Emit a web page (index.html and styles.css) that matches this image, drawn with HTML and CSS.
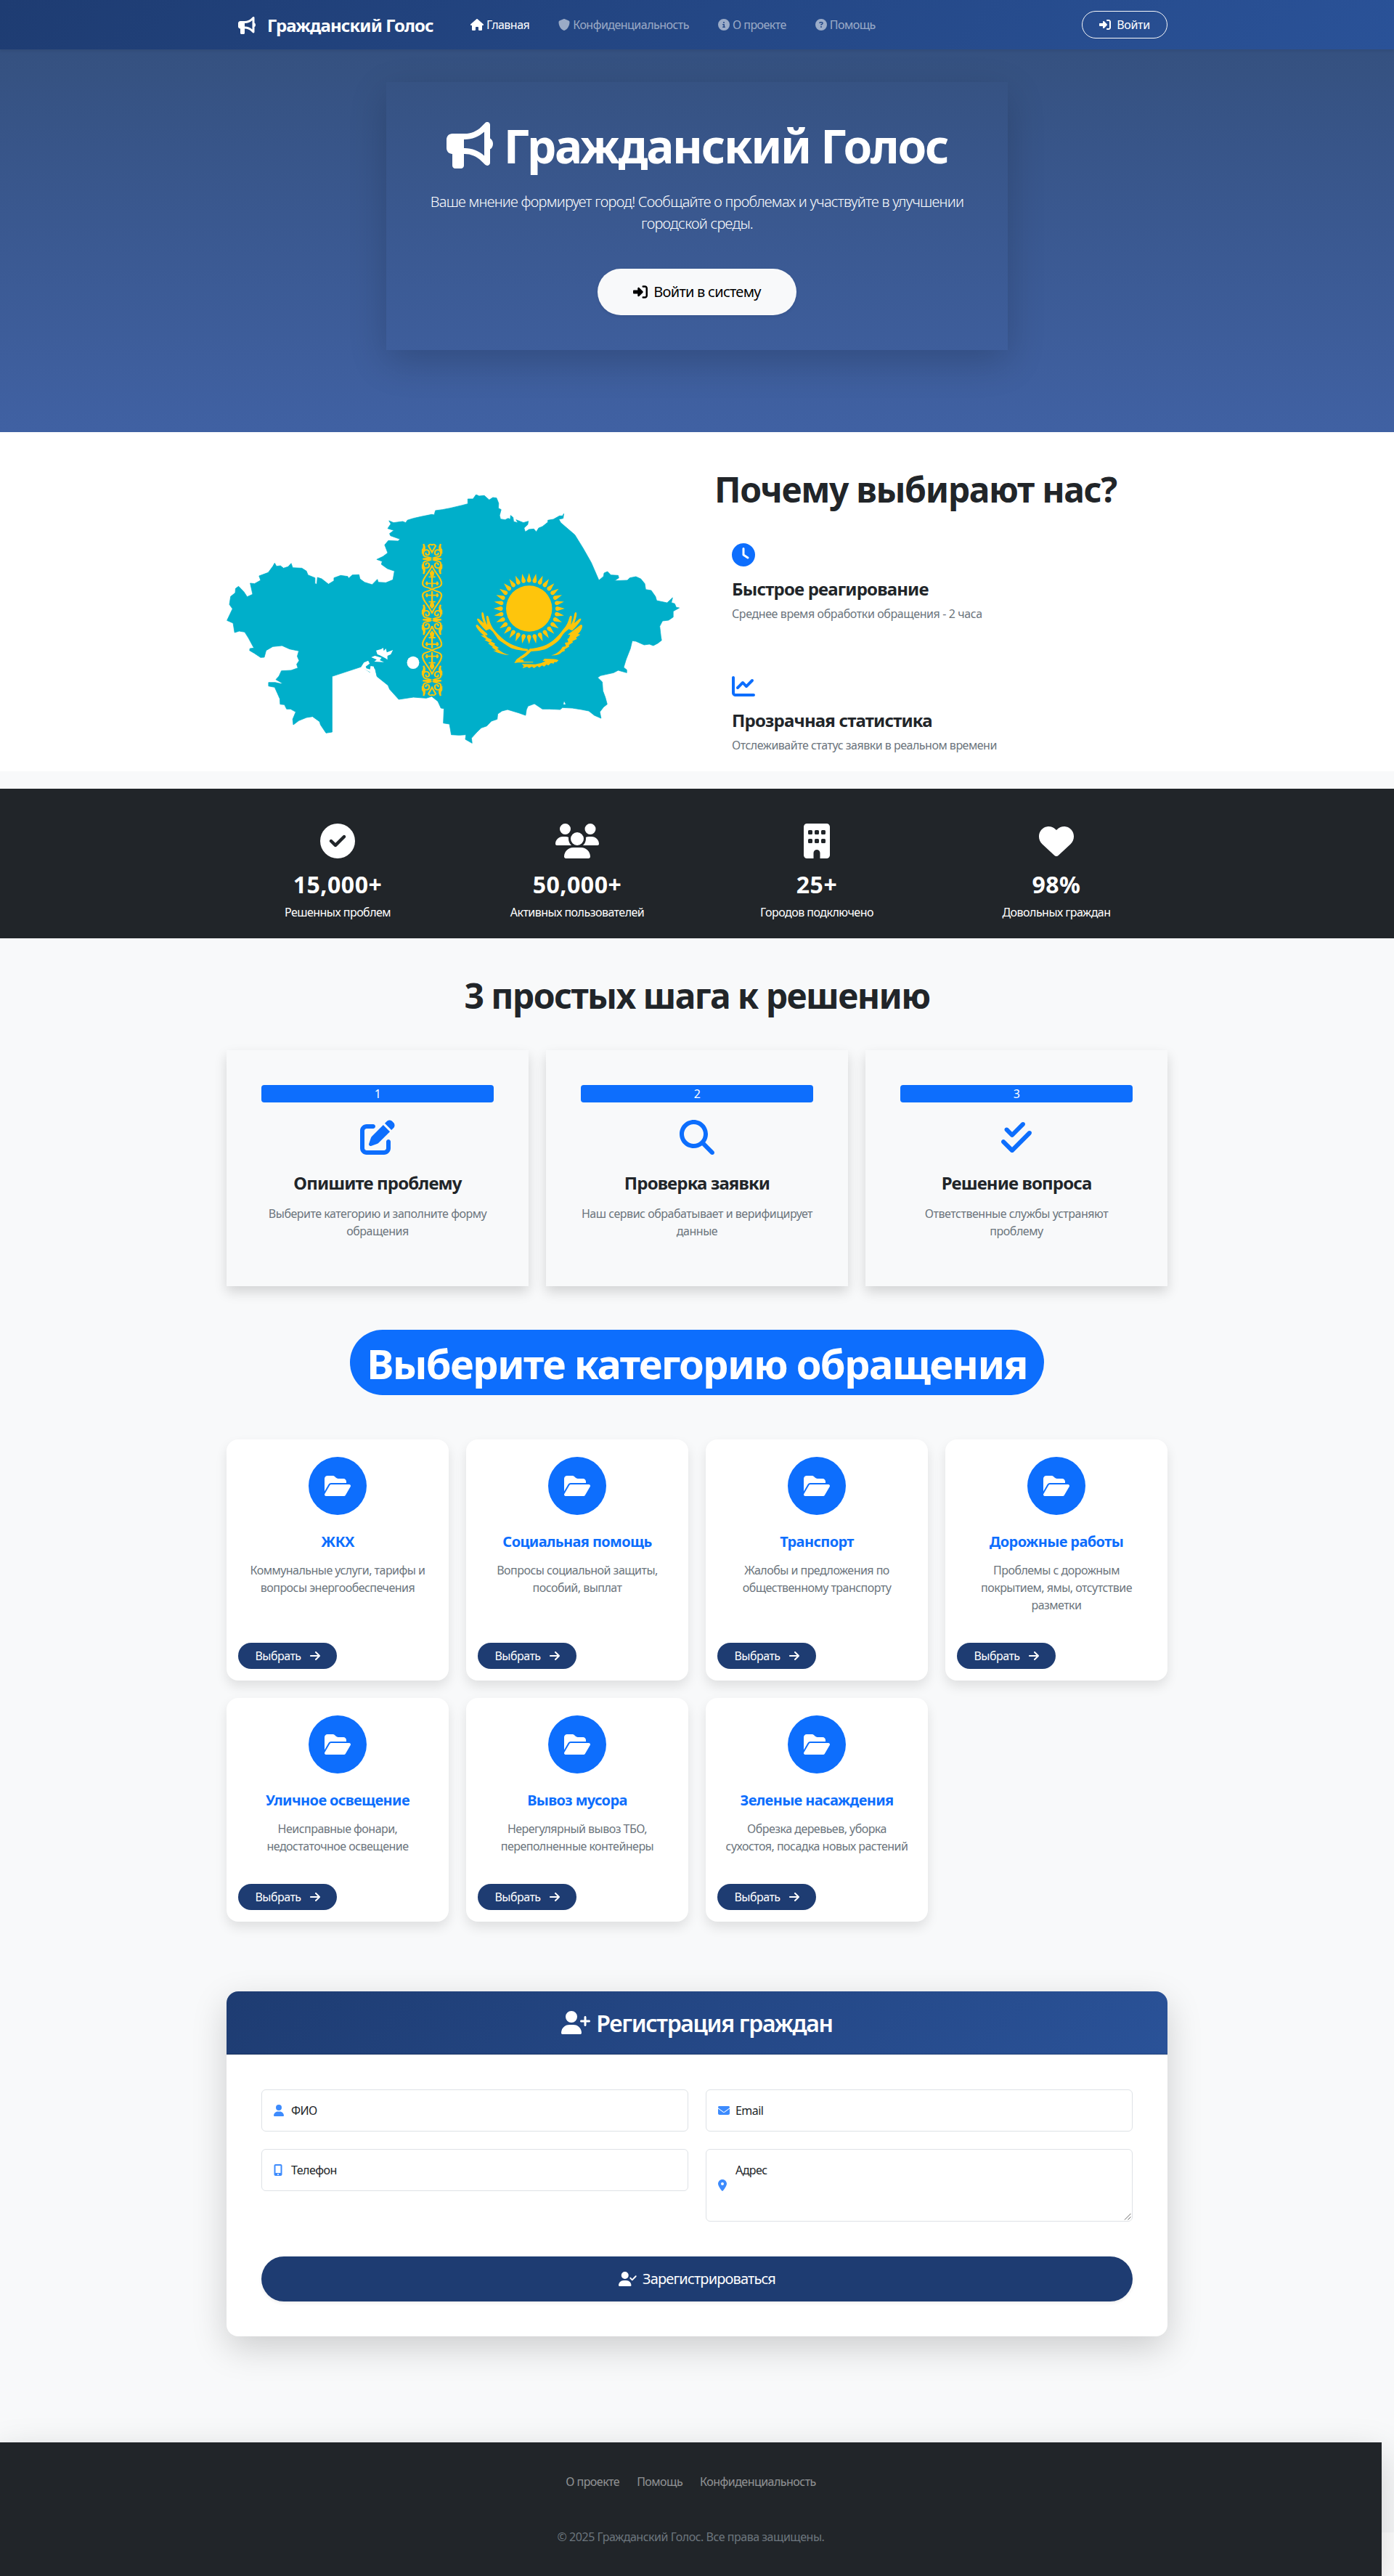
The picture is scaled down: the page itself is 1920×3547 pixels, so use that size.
FILE: index.html
```html
<!DOCTYPE html>
<html lang="ru">
<head>
<meta charset="utf-8">
<title>Гражданский Голос</title>
<link rel="stylesheet" href="styles.css">
</head>
<body>
<svg class="sprite" aria-hidden="true">
  <symbol id="bullhorn" viewBox="0 0 512 512"><path d="M480 32c0-12.900-7.800-24.600-19.800-29.600s-25.700-2.200-34.900 6.900L381.700 53c-48 48-113.100 75-181 75H64c-35.300 0-64 28.700-64 64v96c0 35.300 28.700 64 64 64v128c0 17.700 14.300 32 32 32h64c17.700 0 32-14.300 32-32V352h8.700c67.900 0 133 27 181 75l43.600 43.600c9.200 9.200 22.900 11.900 34.900 6.900s19.800-16.600 19.800-29.600V300.400c18.600-8.800 32-32.500 32-60.400s-13.400-51.600-32-60.400V32zm-64 76.700v262.600C357.200 317.800 280.500 288 200.700 288H192V192h8.700c79.800 0 156.500-29.800 215.300-83.300z"/></symbol>
  <symbol id="house" viewBox="0 0 576 512"><path d="M575.800 255.500c0 18-15 32.100-32 32.100h-32l.7 160.200c0 2.700-.2 5.400-.5 8.100V472c0 22.100-17.900 40-40 40H392c-22.100 0-40-17.900-40-40V384c0-17.700-14.300-32-32-32H256c-17.700 0-32 14.300-32 32v88c0 22.100-17.900 40-40 40H104c-22.100 0-40-17.900-40-40V287.600H32c-18 0-32-14-32-32.100c0-9 3-17 10-24L266.400 8c7-7 15-8 22-8s15 2 21 7L564.800 231.500c8 7 12 15 11 24z"/></symbol>
  <symbol id="shield" viewBox="0 0 512 512"><path d="M256 0c4.600 0 9.200 1 13.400 2.900L457.700 82.800c22 9.300 38.400 31 38.300 57.200c-.5 99.200-41.300 280.700-213.600 363.200c-16.700 8-36.100 8-52.800 0C57.300 420.700 16.500 239.200 16 140c-.1-26.200 16.300-47.900 38.300-57.200L242.700 2.900C246.800 1 251.400 0 256 0z"/></symbol>
  <symbol id="info" viewBox="0 0 512 512"><path d="M256 512A256 256 0 1 0 256 0a256 256 0 1 0 0 512zM216 336h24V272H216c-13.300 0-24-10.700-24-24s10.700-24 24-24h48c13.300 0 24 10.700 24 24v88h8c13.300 0 24 10.700 24 24s-10.700 24-24 24H216c-13.300 0-24-10.700-24-24s10.700-24 24-24zm40-208a32 32 0 1 1 0 64 32 32 0 1 1 0-64z"/></symbol>
  <symbol id="question" viewBox="0 0 512 512"><path d="M256 512A256 256 0 1 0 256 0a256 256 0 1 0 0 512zM169.800 165.300c7.900-22.300 29.100-37.300 52.800-37.300h58.300c34.900 0 63.100 28.300 63.100 63.100c0 22.600-12.100 43.500-31.700 54.800L280 264.400c-.2 13-10.900 23.600-24 23.600c-13.300 0-24-10.700-24-24V250.500c0-8.600 4.600-16.500 12.100-20.800l44.300-25.400c4.700-2.700 7.600-7.700 7.600-13.100c0-8.400-6.800-15.100-15.100-15.100H222.600c-3.400 0-6.400 2.100-7.500 5.300l-.4 1.200c-4.400 12.500-18.200 19-30.600 14.600s-19-18.200-14.600-30.600l.3-1.200zM224 352a32 32 0 1 1 64 0 32 32 0 1 1-64 0z"/></symbol>
  <symbol id="login" viewBox="0 0 512 512"><path d="M217.900 105.900L340.700 228.700c7.200 7.200 11.300 17.100 11.300 27.300s-4.100 20.100-11.300 27.300L217.900 406.100c-6.400 6.400-15 9.900-24 9.900c-18.700 0-33.900-15.200-33.900-33.900V320H32c-17.700 0-32-14.300-32-32v-64c0-17.700 14.300-32 32-32h128v-62.100c0-18.700 15.200-33.900 33.900-33.900c9 0 17.600 3.600 24 9.900zM352 416h64c17.700 0 32-14.300 32-32V128c0-17.700-14.300-32-32-32h-64c-17.700 0-32-14.300-32-32s14.300-32 32-32h64c53 0 96 43 96 96v256c0 53-43 96-96 96h-64c-17.700 0-32-14.300-32-32s14.300-32 32-32z"/></symbol>
  <symbol id="clock" viewBox="0 0 512 512"><path d="M256 0a256 256 0 1 1 0 512A256 256 0 1 1 256 0zM232 120V256c0 8 4 15.500 10.700 20l96 64c11 7.400 25.900 4.400 33.300-6.700s4.400-25.900-6.700-33.300L280 243.200V120c0-13.300-10.700-24-24-24s-24 10.700-24 24z"/></symbol>
  <symbol id="chart" viewBox="0 0 512 512"><path d="M64 64c0-17.700-14.300-32-32-32S0 46.300 0 64V400c0 44.200 35.800 80 80 80H480c17.700 0 32-14.300 32-32s-14.300-32-32-32H80c-8.800 0-16-7.200-16-16V64zm406.600 86.600c12.500-12.500 12.500-32.800 0-45.300s-32.800-12.500-45.300 0L320 210.700l-57.400-57.400c-12.500-12.500-32.800-12.500-45.300 0l-112 112c-12.500 12.500-12.500 32.800 0 45.300s32.800 12.500 45.300 0L240 221.300l57.400 57.400c12.500 12.500 32.800 12.500 45.300 0l128-128z"/></symbol>
  <symbol id="check" viewBox="0 0 512 512"><path d="M256 512A256 256 0 1 0 256 0a256 256 0 1 0 0 512zM369 209L241 337c-9.400 9.400-24.600 9.400-33.900 0l-64-64c-9.400-9.400-9.400-24.600 0-33.900s24.600-9.400 33.900 0l47 47L335 175c9.400-9.400 24.600-9.400 33.900 0s9.400 24.600 0 33.900z"/></symbol>
  <symbol id="users" viewBox="0 0 640 512"><path d="M144 0a80 80 0 1 1 0 160A80 80 0 1 1 144 0zM512 0a80 80 0 1 1 0 160A80 80 0 1 1 512 0zM0 298.700C0 239.800 47.800 192 106.700 192h42.700c15.900 0 31 3.500 44.600 9.700c-1.300 7.200-1.900 14.700-1.900 22.300c0 38.200 16.800 72.500 43.300 96H21.300C9.600 320 0 310.400 0 298.700zM404.600 320c26.600-23.500 43.300-57.800 43.300-96c0-7.600-.7-15-1.900-22.300c13.600-6.300 28.700-9.700 44.600-9.700h42.700C592.200 192 640 239.800 640 298.700c0 11.800-9.600 21.300-21.300 21.300H404.600zM224 224a96 96 0 1 1 192 0 96 96 0 1 1-192 0zM128 485.300C128 411.700 187.700 352 261.300 352H378.700C452.300 352 512 411.700 512 485.300c0 14.700-11.900 26.700-26.700 26.700H154.700c-14.700 0-26.700-11.900-26.700-26.700z"/></symbol>
  <symbol id="building" viewBox="0 0 384 512"><path fill-rule="evenodd" d="M48 0C21.500 0 0 21.500 0 48V464c0 26.500 21.500 48 48 48h96V432c0-26.500 21.500-48 48-48s48 21.500 48 48v80h96c26.500 0 48-21.500 48-48V48c0-26.500-21.500-48-48-48H48zM80 96h32q16 0 16 16v32q0 16-16 16H80q-16 0-16-16v-32q0-16 16-16zm96 0h32q16 0 16 16v32q0 16-16 16h-32q-16 0-16-16v-32q0-16 16-16zm96 0h32q16 0 16 16v32q0 16-16 16h-32q-16 0-16-16v-32q0-16 16-16zM80 224h32q16 0 16 16v32q0 16-16 16H80q-16 0-16-16v-32q0-16 16-16zm96 0h32q16 0 16 16v32q0 16-16 16h-32q-16 0-16-16v-32q0-16 16-16zm96 0h32q16 0 16 16v32q0 16-16 16h-32q-16 0-16-16v-32q0-16 16-16z"/></symbol>
  <symbol id="heart" viewBox="0 0 512 512"><path d="M47.600 300.400L228.300 469.100c7.500 7 17.400 10.900 27.700 10.900s20.200-3.900 27.700-10.900L464.400 300.400c30.400-28.300 47.600-68 47.600-109.500v-5.800c0-69.900-50.500-129.500-119.400-141C347 36.500 300.600 51.400 268 84L256 96 244 84c-32.600-32.600-79-47.500-124.600-39.900C50.500 55.600 0 115.200 0 185.100v5.800c0 41.500 17.200 81.200 47.600 109.500z"/></symbol>
  <symbol id="edit" viewBox="0 0 512 512"><path d="M471.600 21.700c-21.900-21.900-57.300-21.900-79.200 0L362.300 51.700l97.900 97.900 30.100-30.100c21.900-21.900 21.900-57.300 0-79.200L471.600 21.700zm-299.200 220c-6.100 6.100-10.800 13.600-13.500 21.900l-29.600 88.800c-2.900 8.600-.6 18.100 5.800 24.600s15.900 8.700 24.600 5.800l88.800-29.600c8.200-2.700 15.700-7.400 21.900-13.500L437.700 172.300 339.700 74.300 172.400 241.700zM96 64C43 64 0 107 0 160V416c0 53 43 96 96 96H352c53 0 96-43 96-96V320c0-17.700-14.300-32-32-32s-32 14.300-32 32v96c0 17.700-14.300 32-32 32H96c-17.700 0-32-14.300-32-32V160c0-17.700 14.300-32 32-32h96c17.700 0 32-14.300 32-32s-14.300-32-32-32H96z"/></symbol>
  <symbol id="search" viewBox="0 0 512 512"><path d="M416 208c0 45.900-14.900 88.300-40 122.700L502.600 457.400c12.500 12.500 12.500 32.800 0 45.300s-32.800 12.500-45.300 0L330.700 376c-34.400 25.200-76.800 40-122.700 40C93.100 416 0 322.900 0 208S93.100 0 208 0S416 93.100 416 208zM208 352a144 144 0 1 0 0-288 144 144 0 1 0 0 288z"/></symbol>
  <symbol id="double" viewBox="0 0 448 512"><path d="M342.600 86.600c12.500-12.500 12.500-32.800 0-45.300s-32.800-12.500-45.300 0L160 178.700l-57.400-57.400c-12.500-12.500-32.800-12.500-45.300 0s-12.500 32.800 0 45.300l80 80c12.500 12.500 32.800 12.500 45.300 0l160-160zm96 128c12.500-12.500 12.500-32.800 0-45.300s-32.800-12.500-45.300 0L160 402.700 54.600 297.400c-12.500-12.500-32.800-12.500-45.300 0s-12.500 32.800 0 45.300l128 128c12.500 12.500 32.800 12.500 45.300 0l256-256z"/></symbol>
  <symbol id="folder" viewBox="0 0 576 512"><path d="M88.700 223.800L0 375.800V96C0 60.700 28.700 32 64 32H181.500c17 0 33.300 6.700 45.300 18.700l26.500 26.500c12 12 28.300 18.700 45.300 18.700H416c35.300 0 64 28.700 64 64v32H144c-22.800 0-43.800 12.100-55.300 31.800zm27.600 16.100C122.100 230 132.600 224 144 224H544c11.500 0 22 6.100 27.700 16.100s5.700 22.200-.1 32.100l-112 192C453.900 474 443.400 480 432 480H32c-11.500 0-22-6.100-27.700-16.100s-5.700-22.200.1-32.100l112-192z"/></symbol>
  <symbol id="arrow" viewBox="0 0 448 512"><path d="M438.600 278.600c12.500-12.500 12.500-32.800 0-45.300l-160-160c-12.500-12.500-32.800-12.500-45.300 0s-12.500 32.800 0 45.300L338.800 224H32c-17.700 0-32 14.300-32 32s14.300 32 32 32h306.700L233.400 393.400c-12.500 12.500-12.500 32.800 0 45.300s32.800 12.500 45.300 0l160-160z"/></symbol>
  <symbol id="user-plus" viewBox="0 0 640 512"><path d="M96 128a128 128 0 1 1 256 0A128 128 0 1 1 96 128zM0 482.300C0 383.800 79.800 304 178.300 304h91.400C368.200 304 448 383.800 448 482.300c0 16.400-13.300 29.700-29.700 29.700H29.700C13.300 512 0 498.700 0 482.300zM504 312V248H440c-13.300 0-24-10.700-24-24s10.700-24 24-24h64V136c0-13.300 10.700-24 24-24s24 10.700 24 24v64h64c13.300 0 24 10.700 24 24s-10.700 24-24 24H552v64c0 13.300-10.700 24-24 24s-24-10.700-24-24z"/></symbol>
  <symbol id="user-check" viewBox="0 0 640 512"><path d="M96 128a128 128 0 1 1 256 0A128 128 0 1 1 96 128zM0 482.300C0 383.800 79.800 304 178.300 304h91.400C368.200 304 448 383.800 448 482.300c0 16.400-13.300 29.700-29.700 29.700H29.700C13.300 512 0 498.700 0 482.300zM625 177L497 305c-9.400 9.400-24.600 9.400-33.900 0l-64-64c-9.400-9.400-9.400-24.600 0-33.900s24.600-9.400 33.900 0l47 47L591 143c9.400-9.400 24.600-9.400 33.900 0s9.400 24.600 0 33.900z"/></symbol>
  <symbol id="user" viewBox="0 0 448 512" preserveAspectRatio="xMinYMid"><path d="M224 256A128 128 0 1 0 224 0a128 128 0 1 0 0 256zm-45.700 48C79.800 304 0 383.800 0 482.300C0 498.700 13.300 512 29.700 512H418.300c16.400 0 29.700-13.300 29.700-29.700C448 383.800 368.200 304 269.700 304H178.300z"/></symbol>
  <symbol id="mail" viewBox="0 0 512 512"><path d="M48 64C21.500 64 0 85.500 0 112c0 15.100 7.100 29.300 19.200 38.400L236.800 313.600c11.400 8.500 27 8.500 38.400 0L492.800 150.400c12.100-9.100 19.200-23.300 19.200-38.400c0-26.500-21.500-48-48-48H48zM0 176V384c0 35.300 28.700 64 64 64H448c35.300 0 64-28.700 64-64V176L294.400 339.200c-22.800 17.100-54 17.100-76.800 0L0 176z"/></symbol>
  <symbol id="mobile" viewBox="0 0 384 512" preserveAspectRatio="xMinYMid"><path fill-rule="evenodd" d="M16 64C16 28.700 44.700 0 80 0H304c35.300 0 64 28.700 64 64V448c0 35.300-28.700 64-64 64H80c-35.300 0-64-28.700-64-64V64zM224 448a32 32 0 1 0-64 0 32 32 0 1 0 64 0zM304 64H80V384H304V64z"/></symbol>
  <symbol id="pin" viewBox="0 0 384 512" preserveAspectRatio="xMinYMid"><path d="M215.700 499.200C267 435 384 279.400 384 192C384 86 298 0 192 0S0 86 0 192c0 87.400 117 243 168.300 307.200c12.300 15.300 35.100 15.300 47.400 0zM192 128a64 64 0 1 1 0 128 64 64 0 1 1 0-128z"/></symbol>
</svg>

<nav class="navbar">
  <div class="container navbar-inner">
    <a class="brand"><svg><use href="#bullhorn"/></svg><span>Гражданский Голос</span></a>
    <div class="nav-links">
      <a class="active"><svg class="w18"><use href="#house"/></svg>Главная</a>
      <a><svg><use href="#shield"/></svg>Конфиденциальность</a>
      <a><svg><use href="#info"/></svg>О проекте</a>
      <a><svg><use href="#question"/></svg>Помощь</a>
    </div>
    <a class="login"><svg><use href="#login"/></svg>Войти</a>
  </div>
</nav>

<header class="hero">
  <div class="hero-card">
    <h1><svg><use href="#bullhorn"/></svg>Гражданский Голос</h1>
    <p>Ваше мнение формирует город! Сообщайте о проблемах и участвуйте в улучшении<br>городской среды.</p>
    <a class="hero-button"><svg><use href="#login"/></svg>Войти в систему</a>
  </div>
</header>

<section class="why">
  <div class="container why-grid">
    <svg class="map" viewBox="28.500 124 1482.400 1028" preserveAspectRatio="none">
      <defs>
        <g id="scroll-left">
          <path d="M-2 2C-12 12-29 4-29 22C-29 42-9 42-9 25C-9 13-23 14-20 26M-30 0Q-16 4-6 0"/>
          <path class="solid" d="M-31 28Q-19 42-28 62Q-24 48-31 38z"/>
        </g>
        <g id="scroll"><use href="#scroll-left"/><use href="#scroll-left" transform="scale(-1 1)"/></g>
        <g id="lattice">
          <use href="#scroll"/>
          <path d="M0 26C-6 54-31 76-31 101C-31 120-8 116 0 127C8 116 31 120 31 101C31 76 6 54 0 26"/>
          <path d="M0 54V118M-22 101H22M-17 93V109M17 93V109M-11 74H11"/>
          <path class="solid" d="M0 50L5 58L3 68H-3L-5 58z"/>
        </g>
        <g id="cap"><use href="#scroll"/><path d="M0 28L-12 54Q-6 64 0 58Q6 64 12 54z"/></g>
        <path id="ray" d="M49 0L40 -2.700A2.900 2.900 0 1 0 40 2.700z"/>
        <g id="rays4"><use href="#ray"/><use href="#ray" transform="rotate(11.250)"/><use href="#ray" transform="rotate(22.500)"/><use href="#ray" transform="rotate(33.750)"/></g>
        <g id="rays8"><use href="#rays4"/><use href="#rays4" transform="rotate(45)"/></g>
      </defs>
      <path class="land" d="M845 124L855 130 872 128 888 146 900 136 912 138 919 160 918 180 927 186 922 210 925 225 940 228 950 222 957 226 958 210 966 218 968 236 982 240 976 228 1000 240 1016 234 1014 248 1002 262 1006 278 1018 268 1034 266 1042 278 1050 262 1062 256 1080 238 1080 230 1098 226 1118 212 1128 212 1132 203 1130 222 1116 226 1122 240 1168 290 1195 345 1222 405 1247 478 1262 462 1264 448 1275 442 1286 456 1310 458 1312 468 1298 480 1340 478 1348 468 1368 463 1384 472 1397 492 1400 516 1418 520 1432 545 1436 562 1470 571 1488 550 1484 570 1495 575 1500 590 1510 592 1490 606 1490 630 1475 643 1455 646 1446 668 1450 712 1452 726 1440 738 1425 748 1412 742 1395 745 1368 730 1356 728 1350 760 1336 805 1328 838 1338 848 1338 860 1310 850 1295 860 1252 872 1243 880 1258 898 1260 935 1268 962 1274 990 1262 1002 1250 1022 1254 1048 1232 1036 1214 1018 1190 1012 1160 1006 1128 1004 1120 1012 1085 1010 1062 1010 1036 988 1015 998 1010 1012 1007 1036 985 1026 948 1012 930 1018 916 1030 914 1052 895 1060 880 1080 862 1088 848 1105 830 1130 832 1151 810 1135 812 1116 790 1118 764 1116 758 1072 738 1068 740 1008 730 1006 720 978 700 958 682 965 640 961 592 970 562 928 557 912 520 875 515 845 505 835 498 858 476 840 468 836 374 875 374 1105 354 1109 336 1075 333 1062 310 1041 290 1045 265 1058 247 1075 245 1052 255 1022 238 1010 225 1010 218 992 204 990 203 968 195 945 186 920 166 915 166 900 188 900 205 905 212 904 190 888 200 874 208 852 240 850 262 840 258 825 266 810 260 792 265 770 235 762 210 748 180 752 158 768 152 796 140 797 120 780 104 768 105 760 118 758 100 716 88 692 70 688 55 694 50 655 30 644 48 596 38 578 42 545 57 530 58 512 68 503 85 525 96 546 114 536 106 490 120 492 140 478 135 460 165 446 180 420 186 407 192 420 205 418 215 428 230 422 240 408 245 426 275 428 290 440 295 456 318 468 318 492 324 494 326 466 340 472 362 494 380 480 380 468 402 458 425 462 428 470 440 456 462 455 465 472 480 486 505 496 522 474 525 486 550 488 573 476 578 440 555 430 535 412 538 400 520 392 540 380 556 365 546 332 558 314 590 316 596 308 565 294 562 285 576 272 556 264 566 245 560 232 575 240 605 235 615 240 620 230 640 222 665 215 700 206 708 208 712 190 735 186 760 180 800 168 818 162 818 142 835 142z"/>
      <path class="water" d="M518 768L535 762 541 757 543 770 550 760 553 776 573 766 566 784 555 790 555 806 548 800 530 788 522 784zM502 796L514 790 536 798 530 808 544 816 512 814 520 806zM468 838L478 818 492 810 497 822 484 834 486 842 498 846 500 832 510 834 520 878 496 856zM1133 978L1138 990 1131 991z"/>
      <ellipse class="water" cx="639" cy="818" rx="20" ry="26"/>
      <g class="ornament">
        <use href="#cap" transform="translate(701 390) scale(1 -1)"/>
        <use href="#lattice" transform="translate(701 390)"/>
        <use href="#lattice" transform="translate(701 641) scale(1 -1)"/>
        <use href="#lattice" transform="translate(701 641)"/>
        <use href="#lattice" transform="translate(701 893) scale(1 -1)"/>
        <use href="#cap" transform="translate(701 893)"/>
      </g>
      <g class="gold">
        <g transform="translate(1018.500 595) scale(2.376 3)">
          <circle r="31.700"/>
          <use href="#rays8"/><use href="#rays8" transform="rotate(90)"/><use href="#rays8" transform="rotate(180)"/><use href="#rays8" transform="rotate(270)"/>
        </g>
        <g transform="translate(646.200 300) scale(.792 1)">
          <path d="M274 312Q280 306 283 318C286 340 292 352 297 362L293 328Q298 320 303 330C308 355 318 375 330 388C345 405 365 425 385 436C410 450 440 460 466 462L464 471C430 468 400 463 385 452C370 440 350 430 340 420C328 402 318 385 306 380L292 386C278 372 262 355 255 340Q254 334 262 337L283 355C278 340 272 325 274 312z"/>
          <path d="M250 366Q250 360 257 362L275 380 298 400 297 406 288 404 300 416 318 425 312 430 330 440 326 445 346 458 338 460C355 475 370 482 388 487C365 486 345 480 322 468L335 468 315 455 322 455 300 438 308 436 286 425 294 422 270 405 284 406C270 395 255 380 250 366z"/>
          <path d="M666 312Q660 306 657 318C654 340 648 352 643 362L647 328Q642 320 637 330C632 350 625 365 612 380C590 410 570 430 540 445C515 455 490 460 474 460L464 470C450 485 430 495 418 505L409 520 425 518 487 518V515L448 514 446 506 430 505C450 500 460 490 478 472C500 470 530 470 553 455C575 442 595 428 606 408C612 398 620 390 634 380L648 386C662 372 678 355 685 340Q686 334 678 337L657 355C662 340 668 325 666 312z"/>
          <path d="M690 366Q690 360 683 362L660 380 630 402 640 404 634 418 628 420 632 434 618 436 622 450 608 453C600 470 580 485 560 488C585 490 600 482 606 474L618 470 616 464 636 452 634 446 652 434 648 430 668 420 664 414 682 402 672 400C682 390 690 378 690 366z"/>
          <path d="M534 502L580 504 592 508 584 516 574 516 572 522 560 520 550 530 542 526 532 535 524 530 512 538 504 532 490 541 482 534 470 541 462 535 443 542 448 532 440 524 495 525 520 520 538 512 526 510z"/>
        </g>
      </g>
    </svg>
    <div class="why-text">
      <h2>Почему выбирают нас?</h2>
      <div class="feature"><svg><use href="#clock"/></svg><h3>Быстрое реагирование</h3><p>Среднее время обработки обращения - 2 часа</p></div>
      <div class="feature"><svg><use href="#chart"/></svg><h3>Прозрачная статистика</h3><p>Отслеживайте статус заявки в реальном времени</p></div>
    </div>
  </div>
</section>

<section class="stats">
  <div class="container stats-grid">
    <div><svg><use href="#check"/></svg><b>15,000+</b><span>Решенных проблем</span></div>
    <div><svg class="w60"><use href="#users"/></svg><b>50,000+</b><span>Активных пользователей</span></div>
    <div><svg class="w36"><use href="#building"/></svg><b>25+</b><span>Городов подключено</span></div>
    <div><svg><use href="#heart"/></svg><b>98%</b><span>Довольных граждан</span></div>
  </div>
</section>

<section class="container steps">
  <h2>3 простых шага к решению</h2>
  <div class="steps-grid">
    <article><span class="number">1</span><svg><use href="#edit"/></svg><h3>Опишите проблему</h3><p>Выберите категорию и заполните форму<br>обращения</p></article>
    <article><span class="number">2</span><svg><use href="#search"/></svg><h3>Проверка заявки</h3><p>Наш сервис обрабатывает и верифицирует<br>данные</p></article>
    <article><span class="number">3</span><svg><use href="#double"/></svg><h3>Решение вопроса</h3><p>Ответственные службы устраняют<br>проблему</p></article>
  </div>
</section>

<section class="container categories">
  <h2>Выберите категорию обращения</h2>
  <div class="category-grid">
    <article><div class="disc"><svg><use href="#folder"/></svg></div><h3>ЖКХ</h3><p>Коммунальные услуги, тарифы и<br>вопросы энергообеспечения</p><a>Выбрать<svg><use href="#arrow"/></svg></a></article>
    <article><div class="disc"><svg><use href="#folder"/></svg></div><h3>Социальная помощь</h3><p>Вопросы социальной защиты,<br>пособий, выплат</p><a>Выбрать<svg><use href="#arrow"/></svg></a></article>
    <article><div class="disc"><svg><use href="#folder"/></svg></div><h3>Транспорт</h3><p>Жалобы и предложения по<br>общественному транспорту</p><a>Выбрать<svg><use href="#arrow"/></svg></a></article>
    <article><div class="disc"><svg><use href="#folder"/></svg></div><h3>Дорожные работы</h3><p>Проблемы с дорожным<br>покрытием, ямы, отсутствие<br>разметки</p><a>Выбрать<svg><use href="#arrow"/></svg></a></article>
    <article><div class="disc"><svg><use href="#folder"/></svg></div><h3>Уличное освещение</h3><p>Неисправные фонари,<br>недостаточное освещение</p><a>Выбрать<svg><use href="#arrow"/></svg></a></article>
    <article><div class="disc"><svg><use href="#folder"/></svg></div><h3>Вывоз мусора</h3><p>Нерегулярный вывоз ТБО,<br>переполненные контейнеры</p><a>Выбрать<svg><use href="#arrow"/></svg></a></article>
    <article><div class="disc"><svg><use href="#folder"/></svg></div><h3>Зеленые насаждения</h3><p>Обрезка деревьев, уборка<br>сухостоя, посадка новых растений</p><a>Выбрать<svg><use href="#arrow"/></svg></a></article>
  </div>
</section>

<section class="container register">
  <h2><svg><use href="#user-plus"/></svg>Регистрация граждан</h2>
  <form>
    <div class="fields">
      <label class="field"><svg><use href="#user"/></svg><span>ФИО</span></label>
      <label class="field"><svg><use href="#mail"/></svg><span>Email</span></label>
      <label class="field"><svg><use href="#mobile"/></svg><span>Телефон</span></label>
      <label class="field area"><svg><use href="#pin"/></svg><span>Адрес</span><svg class="grip" viewBox="0 0 10 10"><path d="M1 9.500L9.500 1M5.500 9.500L9.500 5.500"/></svg></label>
    </div>
    <button type="button"><svg><use href="#user-check"/></svg>Зарегистрироваться</button>
  </form>
</section>

<div class="page-end">
  <footer>
    <div class="footer-links"><a>О проекте</a><a>Помощь</a><a>Конфиденциальность</a></div>
    <p>© 2025 Гражданский Голос. Все права защищены.</p>
  </footer>
</div>
</body>
</html>
```
FILE: styles.css
```css
* { box-sizing: border-box; }
body { margin: 0; background: #f8f9fa; color: #212529; font: 16px/24px "Noto Sans", "Open Sans", sans-serif; letter-spacing: -.033em; }
h1, h2, h3, p { margin: 0; }
h1, h2, h3 { font-weight: 700; line-height: 1.2; letter-spacing: -.033em; }
svg { display: block; flex: none; fill: currentColor; }
.sprite { display: none; }
.container { width: 1296px; margin: 0 auto; }

.navbar { position: relative; z-index: 2; height: 68px; background: linear-gradient(135deg, #1e3c72, #2a5298); color: #fff; box-shadow: 0 2px 4px rgba(0,0,0,.075); }
.navbar-inner { display: flex; align-items: center; height: 68px; }
.brand { display: flex; align-items: center; gap: 16px; margin-left: 16px; width: 320px; font-size: 24px; font-weight: 700; letter-spacing: -.037em; line-height: 36px; padding-top: 2px; }
.brand svg { width: 24px; height: 24px; }
.nav-links { display: flex; gap: 40px; color: rgba(255,255,255,.55); }
.nav-links a { display: flex; align-items: center; gap: 4px; }
.nav-links svg { width: 16px; height: 16px; }
.nav-links .w18 { width: 18px; }
.nav-links .active { color: #fff; }
.login { display: flex; align-items: center; justify-content: center; gap: 8px; width: 118px; height: 38px; margin-left: auto; border: 1px solid #f8f9fa; border-radius: 19px; letter-spacing: -.02em; }
.login svg { width: 16px; height: 16px; }

.hero { height: 527px; padding-top: 45px; background: linear-gradient(#355180, #4061a3); color: #fff; }
.hero-card { width: 856px; height: 369px; margin: 0 auto; padding: 48px 0; box-shadow: 0 16px 48px rgba(0,0,0,.175); text-align: center; }
.hero h1 { display: flex; justify-content: center; align-items: center; gap: 15px; height: 77px; padding-top: 4px; font-size: 64px; letter-spacing: -.0357em; }
.hero h1 svg { width: 64px; height: 64px; margin-bottom: 3px; }
.hero p { margin-top: 25px; height: 60px; font-size: 20px; line-height: 30px; font-weight: 300; letter-spacing: -.037em; }
.hero-button { display: flex; align-items: center; justify-content: center; gap: 8px; width: 274px; height: 64px; margin: 47px auto 0; border-radius: 32px; background: #f8f9fa; color: #000; font-size: 20px; letter-spacing: -.037em; box-shadow: 0 2px 4px rgba(0,0,0,.075); }
.hero-button svg { width: 20px; height: 20px; }

.why { height: 467px; padding-top: 48px; background: #fff; }
.why-grid { display: grid; grid-template-columns: 624px 624px; gap: 48px; align-items: center; }
.map { width: 624px; height: 342.700px; }
.land { fill: #00afca; stroke: #00afca; stroke-width: 2; stroke-linejoin: round; }
.water { fill: #fff; }
.gold { fill: #fec50c; }
.ornament { fill: none; stroke: #fec50c; stroke-width: 5.500; }
.ornament .solid { fill: #fec50c; stroke-width: 2; }
.why h2 { height: 57px; padding-top: 2px; font-size: 48px; letter-spacing: -.028em; }
.feature { height: 157px; margin-top: 24px; padding: 24px; }
.feature svg { width: 32px; height: 32px; color: #0d6efd; }
.feature h3 { margin: 17px 0 7px; font-size: 24px; height: 29px; letter-spacing: -.034em; }
.feature p, .steps p, .categories p { color: #6c757d; }
.feature p { letter-spacing: -.031em; }
.feature:nth-child(2) p { letter-spacing: -.025em; }

.stats { height: 206px; margin-top: 24px; padding-top: 48px; background: #212529; color: #fff; }
.stats-grid { display: grid; grid-template-columns: repeat(4, 306px); gap: 24px; }
.stats-grid div { display: flex; flex-direction: column; align-items: center; }
.stats svg { width: 48px; height: 48px; }
.stats .w60 { width: 60px; }
.stats .w36 { width: 36px; }
.stats b { margin: 17px 0 7px; font-size: 32px; line-height: 38px; letter-spacing: .016em; }

.steps { padding-top: 48px; }
.steps h2 { height: 58px; padding-top: 2px; text-align: center; font-size: 48px; }
.steps-grid { display: grid; grid-template-columns: repeat(3, 416px); gap: 24px; margin-top: 48px; }
.steps article { display: flex; flex-direction: column; align-items: center; height: 325px; padding: 48px; box-shadow: 0 8px 16px rgba(0,0,0,.15); text-align: center; }
.number { width: 100%; height: 24px; border-radius: 4px; background: #0d6efd; color: #fff; }
.steps svg { width: 48px; height: 48px; margin: 24px 0; color: #0d6efd; }
.steps h3 { height: 29px; font-size: 24px; margin: 1px 0 15px; letter-spacing: -.036em; }
.steps p { margin: 0 -20px; white-space: nowrap; letter-spacing: -.030em; }

.categories { padding-top: 60px; }
.categories h2 { width: 956px; height: 90px; margin: 0 auto 61px; border-radius: 45px; background: #0d6efd; color: #fff; text-align: center; font-size: 56px; line-height: 92px; letter-spacing: -.0304em; white-space: nowrap; }
.category-grid { display: grid; grid-template-columns: repeat(4, 306px); grid-template-rows: 332px 308px; gap: 24px; }
.categories article { display: flex; flex-direction: column; align-items: center; padding: 24px 16px 16px; border-radius: 16px; background: #fff; box-shadow: 0 8px 16px rgba(0,0,0,.1); text-align: center; }
.disc { display: grid; place-items: center; width: 80px; height: 80px; border-radius: 50%; background: #0d6efd; color: #fff; }
.disc svg { width: 36px; height: 32px; }
.categories h3 { margin: 25px 0 15px; color: #0d6efd; font-size: 20px; line-height: 24px; letter-spacing: -.031em; }
.categories p { white-space: nowrap; letter-spacing: -.033em; }
.categories article a { display: flex; align-items: center; justify-content: center; gap: 12px; width: 136px; height: 36px; margin-top: auto; align-self: flex-start; border-radius: 18px; background: #1e3c72; color: #fff; }
.categories a svg { width: 14px; height: 16px; }

.register { margin-top: 96px; height: 475px; border-radius: 16px; background: #fff; box-shadow: 0 16px 48px rgba(0,0,0,.175); overflow: hidden; }
.register h2 { display: flex; align-items: center; justify-content: center; gap: 8px; height: 87px; padding-top: 3px; border-bottom: 1px solid rgba(0,0,0,.176); background: linear-gradient(135deg, #1e3c72, #2a5298); color: #fff; font-size: 32px; font-weight: 600; letter-spacing: -.042em; }
.register h2 svg { width: 40px; height: 32px; margin-bottom: 3px; }
.register form { padding: 48px; }
.fields { display: grid; grid-template-columns: 588px 588px; grid-template-rows: 58px 100px; gap: 24px; align-items: start; }
.field { display: flex; align-items: center; position: relative; height: 58px; padding-left: 16px; border: 1px solid #dee2e6; border-radius: 6px; }
.field svg { height: 16px; width: 16px; color: #3d8bfd; }
.field span { margin-left: 8px; }
.field.area { height: 100px; }
.field.area span { align-self: flex-start; margin-top: 16px; }
.field .grip { position: absolute; right: 1px; bottom: 1px; width: 10px; height: 10px; fill: none; stroke: #666; stroke-width: 1; }
.register button { display: flex; align-items: center; justify-content: center; gap: 8px; width: 1200px; height: 62px; margin-top: 48px; padding: 0; border: 0; border-radius: 31px; background: #1e3c72; color: #fff; font: 20px/30px "Noto Sans", sans-serif; letter-spacing: -.043em; box-shadow: 0 2px 4px rgba(0,0,0,.075); }
.register button svg { width: 25px; height: 20px; }

.page-end { height: 184px; margin-top: 146px; background: linear-gradient(#f8f9fa 124px, #fff 124px); }
footer { width: 1903px; height: 184px; padding-top: 42px; background: #212529; box-shadow: 0 16px 48px rgba(0,0,0,.175); text-align: center; color: #6c757d; }
.footer-links { display: flex; justify-content: center; gap: 24px; color: rgba(255,255,255,.5); }
footer p { margin-top: 52px; letter-spacing: -.030em; }
```
